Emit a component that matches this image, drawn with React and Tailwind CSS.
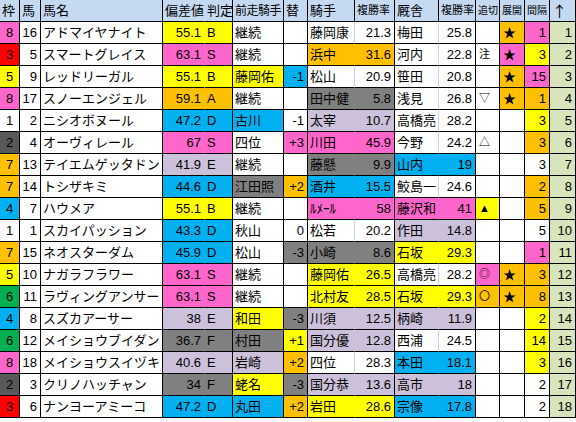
import React from 'react'

const BG = {
  w: 'bg-white',
  p: 'bg-[#ff66cc]',
  r: 'bg-[#ff0000]',
  y: 'bg-[#ffff00]',
  o: 'bg-[#ffc000]',
  b: 'bg-[#00b0f0]',
  g: 'bg-[#808080]',
  d: 'bg-[#595959]',
  l: 'bg-[#ccc0da]',
  n: 'bg-[#00b050]',
}

// 枠, 馬, 馬名, [偏差値, 判定, bg], [前走騎手, bg], [替, bg], [騎手, 率, bg], [厩舎, 率, bg], [追切, bg], [展開, bg], [間隔, bg]
const ROWS = [
  [['8', 'p'], '16', 'アドマイヤナイト', ['55.1', 'B', 'y'], ['継続', 'w'], ['', 'w'], ['藤岡康', '21.3', 'w'], ['梅田', '25.8', 'w'], ['', 'w'], ['★', 'o'], ['1', 'p']],
  [['3', 'r'], '5', 'スマートグレイス', ['63.1', 'S', 'p'], ['継続', 'w'], ['', 'w'], ['浜中', '31.6', 'o'], ['河内', '22.8', 'w'], ['注', 'w'], ['★', 'p'], ['3', 'y']],
  [['5', 'y'], '9', 'レッドリーガル', ['55.1', 'B', 'y'], ['藤岡佑', 'y'], ['-1', 'b'], ['松山', '20.9', 'w'], ['笹田', '20.8', 'w'], ['', 'w'], ['★', 'o'], ['15', 'p']],
  [['8', 'p'], '17', 'スノーエンジェル', ['59.1', 'A', 'o'], ['継続', 'w'], ['', 'w'], ['田中健', '5.8', 'g'], ['浅見', '26.8', 'w'], ['▽', 'w'], ['★', 'o'], ['1', 'o']],
  [['1', 'w'], '2', 'ニシオボヌール', ['47.2', 'D', 'b'], ['古川', 'b'], ['-1', 'w'], ['太宰', '10.7', 'l'], ['高橋亮', '28.2', 'w'], ['', 'w'], ['', 'w'], ['3', 'y']],
  [['2', 'd'], '4', 'オーヴィレール', ['67', 'S', 'p'], ['四位', 'w'], ['+3', 'p'], ['川田', '45.9', 'p'], ['今野', '24.2', 'w'], ['△', 'w'], ['', 'w'], ['3', 'o']],
  [['7', 'o'], '13', 'テイエムゲッタドン', ['41.9', 'E', 'l'], ['継続', 'w'], ['', 'w'], ['藤懸', '9.9', 'g'], ['山内', '19', 'b'], ['', 'w'], ['', 'w'], ['3', 'w']],
  [['7', 'o'], '14', 'トシザキミ', ['44.6', 'D', 'b'], ['江田照', 'g'], ['+2', 'o'], ['酒井', '15.5', 'b'], ['鮫島一', '24.6', 'w'], ['', 'w'], ['', 'w'], ['2', 'o']],
  [['4', 'b'], '7', 'ハウメア', ['55.1', 'B', 'y'], ['継続', 'w'], ['', 'w'], ['ﾙﾒｰﾙ', '58', 'p'], ['藤沢和', '41', 'p'], ['▲', 'y'], ['', 'w'], ['5', 'o']],
  [['1', 'w'], '1', 'スカイパッション', ['43.3', 'D', 'b'], ['秋山', 'w'], ['0', 'w'], ['松若', '20.2', 'w'], ['作田', '14.8', 'l'], ['', 'w'], ['', 'w'], ['5', 'w']],
  [['7', 'o'], '15', 'ネオスターダム', ['45.9', 'D', 'b'], ['松山', 'w'], ['-3', 'g'], ['小崎', '8.6', 'g'], ['石坂', '29.3', 'y'], ['', 'w'], ['', 'w'], ['1', 'p']],
  [['5', 'y'], '10', 'ナガラフラワー', ['63.1', 'S', 'p'], ['継続', 'w'], ['', 'w'], ['藤岡佑', '26.5', 'y'], ['高橋亮', '28.2', 'w'], ['◎', 'p'], ['★', 'o'], ['3', 'o']],
  [['6', 'n'], '11', 'ラヴィングアンサー', ['63.1', 'S', 'p'], ['継続', 'w'], ['', 'w'], ['北村友', '28.5', 'y'], ['石坂', '29.3', 'y'], ['〇', 'o'], ['★', 'o'], ['8', 'o']],
  [['4', 'b'], '8', 'スズカアーサー', ['38', 'E', 'l'], ['和田', 'y'], ['-3', 'g'], ['川須', '12.5', 'l'], ['柄崎', '11.9', 'l'], ['', 'w'], ['', 'w'], ['2', 'y']],
  [['6', 'n'], '12', 'メイショウブイダン', ['36.7', 'F', 'g'], ['村田', 'g'], ['+1', 'y'], ['国分優', '12.8', 'l'], ['西浦', '24.5', 'w'], ['', 'w'], ['', 'w'], ['14', 'y']],
  [['8', 'p'], '18', 'メイショウスイヅキ', ['40.6', 'E', 'l'], ['岩崎', 'l'], ['+2', 'o'], ['四位', '28.3', 'w'], ['本田', '18.1', 'b'], ['', 'w'], ['', 'w'], ['3', 'y']],
  [['2', 'd'], '3', 'クリノハッチャン', ['34', 'F', 'g'], ['蛯名', 'y'], ['-3', 'g'], ['国分恭', '13.6', 'l'], ['高市', '18', 'l'], ['', 'w'], ['', 'w'], ['2', 'w']],
  [['3', 'r'], '6', 'ナンヨーアミーコ', ['47.2', 'D', 'b'], ['丸田', 'b'], ['+2', 'o'], ['岩田', '28.6', 'y'], ['宗像', '17.8', 'b'], ['', 'w'], ['', 'w'], ['2', 'w']],
]

// header labels; narrow columns shrink their text the way Excel's shrink-to-fit does
const HEAD = [
  ['枠', ''], ['馬', ''], ['馬名', ''], ['偏差値', ''], ['判定', ''],
  ['前走騎手', 'text-[12px] tracking-[-0.5px]'], ['替', ''], ['騎手', ''],
  ['複勝率', 'text-[11px]'], ['厩舎', ''], ['複勝率', 'text-[11px]'],
  ['追切', 'text-[10px]'], ['展開', 'text-[10px]'], ['間隔', 'text-[10px]'],
  ['↑', "text-[15px] font-['Noto_Sans_CJK_JP',sans-serif]"],
]

function Cell({ bg = 'bg-white', align = 'left', split, className = '', children }) {
  // split: no dark line to the right (paired cells); white pairs keep a faint grid line
  const right = split
    ? (bg === 'bg-white' ? 'border-r-[#d4d4d4]' : 'border-r-transparent')
    : 'border-r-black'
  const a = align === 'right' ? 'justify-end pr-[3px]' : align === 'center' ? 'justify-center' : 'justify-start pl-[2px]'
  return (
    <div className={`flex items-center h-[22px] border-b border-r border-b-black ${right} ${bg} ${a} overflow-hidden whitespace-nowrap ${className}`}>
      {children}
    </div>
  )
}

export default function App() {
  return (
    <div className="w-[576px] h-[422px] bg-white text-black text-[13px] leading-none font-['Liberation_Sans','Noto_Sans_CJK_JP',sans-serif]">
      <div className="grid grid-cols-[20px_21px_122px_42px_28px_51px_24px_47px_40px_44px_37px_24px_25px_25px_26px]">
        {HEAD.map(([h, cls], i) => (
          <Cell key={i} bg="bg-[#c5d9f1]" split={i === 3} className={cls}>{h}</Cell>
        ))}
        {ROWS.map((r, i) => {
          const [waku, num, name, dev, prev, chg, jk, tr, oi, ten, kan] = r
          return (
            <React.Fragment key={i}>
              <Cell bg={BG[waku[1]]} align="center">{waku[0]}</Cell>
              <Cell align="right">{num}</Cell>
              <Cell>{name}</Cell>
              <Cell bg={BG[dev[2]]} align="right" split>{dev[0]}</Cell>
              <Cell bg={BG[dev[2]]}>{dev[1]}</Cell>
              <Cell bg={BG[prev[1]]}>{prev[0]}</Cell>
              <Cell bg={BG[chg[1]]} align="right">{chg[0]}</Cell>
              <Cell bg={BG[jk[2]]} split>{jk[0]}</Cell>
              <Cell bg={BG[jk[2]]} align="right">{jk[1]}</Cell>
              <Cell bg={BG[tr[2]]} split>{tr[0]}</Cell>
              <Cell bg={BG[tr[2]]} align="right">{tr[1]}</Cell>
              <Cell bg={BG[oi[1]]} className="text-[11px] pl-[3px]">{oi[0]}</Cell>
              <Cell bg={BG[ten[1]]} className="pl-[3px]">{ten[0]}</Cell>
              <Cell bg={BG[kan[1]]} align="right">{kan[0]}</Cell>
              <Cell bg="bg-[#d8e4bc]" align="right">{i + 1}</Cell>
            </React.Fragment>
          )
        })}
      </div>
    </div>
  )
}
